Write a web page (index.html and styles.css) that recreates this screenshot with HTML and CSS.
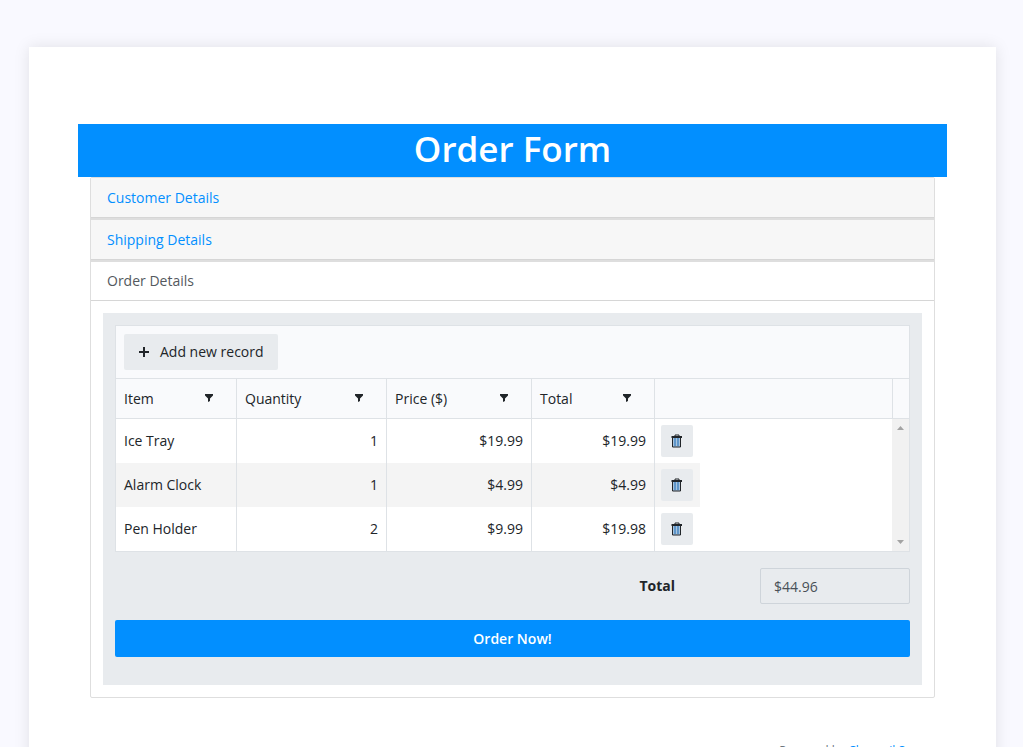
FILE: index.html
```html
<!DOCTYPE html>
<html lang="en">
<head>
    <meta charset="UTF-8">
    <meta name="viewport" content="width=device-width, initial-scale=1.0">
    <title>Order Form</title>
    <link rel="stylesheet" href="styles.css">
</head>
<body>
    <svg class="symbols" aria-hidden="true">
        <symbol id="filter" viewBox="0 0 10 10"><path d="M1 1h8v1.500L6 5.500V8L4 9V5.500L1 2.500z" fill="currentColor"/></symbol>
        <symbol id="trash" viewBox="0 0 12 14"><path d="M4 2.500V1h4v1.500" fill="none" stroke="currentColor"/><path d="M1.500 4v9h8V4" fill="#a9c4dd" stroke="currentColor"/><path d="M0.500 3h10.500" stroke="currentColor" stroke-width="2"/><path d="M4 4v8M7 4v8" stroke="#2f78bd" stroke-width="1.200"/></symbol>
    </svg>
    <main class="page">
        <h1 class="title">Order Form</h1>
        <div class="accordion">
            <div class="card collapsed"><a href="#customer" class="card-header">Customer Details</a></div>
            <div class="card collapsed"><a href="#shipping" class="card-header">Shipping Details</a></div>
            <section class="card">
                <a href="#order" class="card-header active">Order Details</a>
                <div class="card-body">
                    <form class="panel">
                        <div class="grid">
                            <div class="toolbar">
                                <button type="button" class="btn add">
                                    <svg width="10" height="10" viewBox="0 0 10 10"><path d="M5 0v10M0 5h10" stroke="currentColor" stroke-width="2"/></svg>
                                    Add new record
                                </button>
                            </div>
                            <div class="grid-header">
                                <table>
                                    <colgroup><col class="c-item"><col class="c-qty"><col class="c-price"><col class="c-total"><col></colgroup>
                                    <tr>
                                        <th><div class="head">Item <button type="button" class="filter" aria-label="Filter item"><svg width="10" height="10"><use href="#filter"/></svg></button></div></th>
                                        <th><div class="head">Quantity <button type="button" class="filter" aria-label="Filter quantity"><svg width="10" height="10"><use href="#filter"/></svg></button></div></th>
                                        <th><div class="head">Price ($) <button type="button" class="filter" aria-label="Filter price"><svg width="10" height="10"><use href="#filter"/></svg></button></div></th>
                                        <th><div class="head">Total <button type="button" class="filter" aria-label="Filter total"><svg width="10" height="10"><use href="#filter"/></svg></button></div></th>
                                        <th></th>
                                    </tr>
                                </table>
                            </div>
                            <div class="grid-content">
                                <table>
                                    <colgroup><col class="c-item"><col class="c-qty"><col class="c-price"><col class="c-total"><col class="c-cmd"></colgroup>
                                    <tr>
                                        <td>Ice Tray</td><td class="num">1</td><td class="num">$19.99</td><td class="num">$19.99</td>
                                        <td class="cmd"><button type="button" class="btn delete" aria-label="Delete"><svg width="12" height="14"><use href="#trash"/></svg></button></td>
                                    </tr>
                                    <tr>
                                        <td>Alarm Clock</td><td class="num">1</td><td class="num">$4.99</td><td class="num">$4.99</td>
                                        <td class="cmd"><button type="button" class="btn delete" aria-label="Delete"><svg width="12" height="14"><use href="#trash"/></svg></button></td>
                                    </tr>
                                    <tr>
                                        <td>Pen Holder</td><td class="num">2</td><td class="num">$9.99</td><td class="num">$19.98</td>
                                        <td class="cmd"><button type="button" class="btn delete" aria-label="Delete"><svg width="12" height="14"><use href="#trash"/></svg></button></td>
                                    </tr>
                                </table>
                                <div class="scrollbar" aria-hidden="true">
                                    <svg width="7" height="4" viewBox="0 0 7 4"><path d="M0 4L3.500 0L7 4z" fill="#a3a3a3"/></svg>
                                    <svg width="7" height="4" viewBox="0 0 7 4"><path d="M0 0L3.500 4L7 0z" fill="#a3a3a3"/></svg>
                                </div>
                            </div>
                        </div>
                        <div class="summary">
                            <label for="total">Total</label>
                            <input type="text" id="total" value="$44.96" readonly>
                        </div>
                        <button type="button" class="submit">Order Now!</button>
                    </form>
                </div>
            </section>
        </div>
        <footer class="footer">Powered by <a href="#home">Chronail S</a></footer>
    </main>
</body>
</html>
```
FILE: styles.css
```css
* {
    box-sizing: border-box;
}
html {
    overflow: hidden;
}
body {
    margin: 0;
    padding: 47px 27px 0 29px;
    background: #f9f9ff;
    color: #212529;
    font-family: "Segoe UI", "Open Sans", "Noto Sans", sans-serif;
    font-size: 14px;
    line-height: 20px;
}
button, input {
    font: inherit;
    color: inherit;
}
a {
    color: #028fff;
    text-decoration: none;
}
svg {
    display: block;
}
.symbols {
    position: absolute;
    width: 0;
    height: 0;
}
.page {
    min-height: 100vh;
    padding: 77px 49px;
    background: white;
    box-shadow: 0 0 15px rgba(0, 0, 0, 0.1);
}
.title {
    margin: 0;
    height: 53px;
    background: #028fff;
    color: white;
    font-size: 35px;
    font-weight: 600;
    line-height: 50px;
    text-align: center;
}
.accordion {
    margin: 0 12px;
    border: 1px solid #dedede;
    border-radius: 2px;
}
.collapsed {
    border-bottom: 2px solid #dedede;
}
.card-header {
    display: block;
    padding: 10px 16px 9px;
    border-bottom: 1px solid #d6d6d6;
    background: #f7f7f7;
}
.card-header.active {
    padding-top: 9px;
    background: white;
    color: #54595e;
}
.card-body {
    padding: 12px;
}
.panel {
    padding: 12px 12px 28px;
    background: #e8ebee;
}
.grid {
    border: 1px solid #dee2e6;
    background: white;
}
.toolbar {
    padding: 8px;
    border-bottom: 1px solid #dee2e6;
    background: #f9fafc;
}
.btn {
    display: flex;
    align-items: center;
    border: none;
    border-radius: 2px;
    background: #e8ebee;
}
.add {
    height: 36px;
    padding: 0 14px 0 15px;
    gap: 11px;
}
table {
    width: 100%;
    table-layout: fixed;
    border-collapse: separate;
    border-spacing: 0;
}
.c-item { width: 121px; }
.c-qty { width: 150px; }
.c-price { width: 145px; }
.c-total { width: 123px; }
.c-cmd { width: 45px; }
.grid-header {
    padding-right: 16px;
    border-bottom: 1px solid #dee2e6;
    background: #f9fafc;
}
th, td {
    padding: 0 8px;
    border-right: 1px solid #dee2e6;
    font-weight: normal;
    text-align: left;
}
th {
    height: 39px;
}
td {
    height: 44px;
}
.head {
    display: flex;
    align-items: center;
    justify-content: space-between;
}
.filter {
    padding: 0 14px 2px;
    border: none;
    background: none;
}
.grid-content {
    display: flex;
    justify-content: space-between;
}
.grid-content table {
    width: 584px;
}
tr:nth-child(even) td {
    background: #f4f4f4;
}
.num {
    text-align: right;
}
.cmd {
    padding: 0 6px;
    border-right: none;
}
.delete {
    justify-content: center;
    width: 32px;
    height: 32px;
    padding: 0;
}
.scrollbar {
    display: flex;
    flex-direction: column;
    align-items: center;
    justify-content: space-between;
    width: 17px;
    padding: 7px 0;
    background: #f1f1f1;
}
.summary {
    display: flex;
    align-items: center;
    justify-content: flex-end;
    gap: 85px;
    margin: 16px 0;
}
.summary label {
    font-weight: 700;
}
.summary input {
    width: 150px;
    height: 36px;
    padding: 0 13px;
    border: 1px solid #ced4da;
    border-radius: 2px;
    background: #e8ebee;
    color: #495057;
}
.submit {
    width: 100%;
    height: 37px;
    border: none;
    border-radius: 2px;
    background: #028fff;
    color: white;
    font-weight: 600;
}
.footer {
    margin-top: 43px;
    padding-right: 42px;
    color: #6c757d;
    font-size: 12px;
    text-align: right;
}
```
